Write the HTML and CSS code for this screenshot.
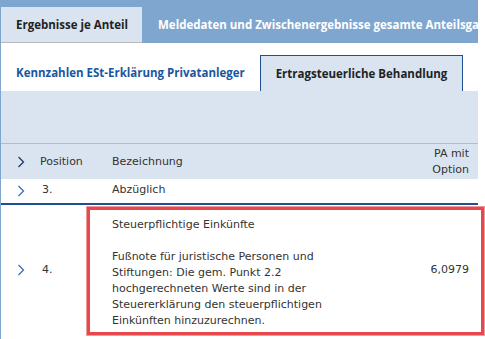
FILE: index.html
```html
<!DOCTYPE html>
<html lang="de">
<head>
  <meta charset="UTF-8">
  <title>Ertragsteuerliche Behandlung</title>
  <link rel="stylesheet" href="styles.css">
</head>
<body>
  <div class="page">
    <div class="tabs">
      <div class="tab active">Ergebnisse je Anteil</div>
      <div class="tab">Meldedaten und Zwischenergebnisse gesamte Anteilsgattung</div>
    </div>

    <div class="subtabs">
      <a class="sublink">Kennzahlen ESt-Erklärung Privatanleger</a>
      <div class="subtab">Ertragsteuerliche Behandlung</div>
    </div>

    <div class="band"></div>

    <div class="row head">
      <svg class="chev dark" width="8" height="12" viewBox="0 0 8 12"><polyline points="1.5,1 6.5,6 1.5,11" /></svg>
      <span>Position</span>
      <span>Bezeichnung</span>
      <span class="val">PA mit<br>Option</span>
    </div>

    <div class="row short">
      <svg class="chev" width="8" height="12" viewBox="0 0 8 12"><polyline points="1.5,1 6.5,6 1.5,11" /></svg>
      <span class="pos">3.</span>
      <span>Abzüglich</span>
      <span class="val"></span>
    </div>

    <div class="row tall">
      <svg class="chev" width="8" height="12" viewBox="0 0 8 12"><polyline points="1.5,1 6.5,6 1.5,11" /></svg>
      <span class="pos">4.</span>
      <span class="desc">Steuerpflichtige Einkünfte<br><br>Fußnote für juristische Personen und Stiftungen: Die gem. Punkt 2.2 hochgerechneten Werte sind in der Steuererklärung den steuerpflichtigen Einkünften hinzuzurechnen.</span>
      <span class="val">6,0979</span>
      <div class="highlight"></div>
    </div>
  </div>
</body>
</html>
```

FILE: styles.css
```css
body {
  margin: 0;
  background: #ffffff;
  font-family: "DejaVu Sans", sans-serif;
  font-size: 11px;
  color: #333333;
}

.page {
  width: 477px;
  border-left: 1px solid #7fa6cf;
  height: 339px;
}

.tabs {
  display: flex;
  background: #7fa6cf;
  padding-top: 7px;
  height: 36px;
  overflow: hidden;
  white-space: nowrap;
  font-family: "Open Sans", sans-serif;
  font-weight: bold;
  font-size: 11.5px;
}

.tab {
  padding: 0 16px;
  line-height: 35px;
  color: #ffffff;
}

.tab.active {
  flex: none;
  width: 110px;
  padding: 0 16px 0 15px;
  background: #d9e4f0;
  color: #222222;
  border-bottom: 1px solid #bbbbbb;
}

.subtabs {
  display: flex;
  align-items: flex-end;
  height: 48px;
  padding-left: 15px;
  font-family: "Open Sans", sans-serif;
  font-weight: bold;
  font-size: 11.5px;
}

.sublink {
  color: #1a56a0;
  line-height: 36px;
  width: 244px;
}

.subtab {
  width: 201px;
  height: 35px;
  line-height: 35px;
  text-align: center;
  background: #d9e4f0;
  border: 1px solid #1d4f91;
  border-bottom: none;
  color: #222222;
}

.band {
  height: 52px;
  background: #d9e4f0;
  border-bottom: 1px solid #bbbbbb;
}

.row {
  display: grid;
  grid-template-columns: 39px 72px 1fr auto;
  align-items: center;
  padding-right: 9px;
  line-height: 16px;
  position: relative;
}

.row.head {
  background: #d9e4f0;
  height: 35px;
}

.row.short {
  height: 26px;
  align-items: start;
  padding-top: 3px;
  box-sizing: border-box;
  border-bottom: 2px solid #1d4f91;
}

.row.short .chev {
  margin-top: 3px;
}

.row.tall {
  padding: 12px 9px 5px 0;
}

.row.tall .chev,
.row.tall .pos,
.row.tall .val {
  margin-top: -6px;
}

.pos {
  padding-left: 2px;
}

.desc {
  width: 218px;
}

.val {
  text-align: right;
}

.chev {
  justify-self: center;
  fill: none;
  stroke: #3b6fb5;
  stroke-width: 1.3;
}

.chev.dark {
  stroke: #1f3a6e;
}

.highlight {
  position: absolute;
  left: 86px;
  top: 2px;
  width: 391px;
  height: 122px;
  border: 3px solid #e8474c;
  box-shadow: 0 0 0 1px #f39a9c;
}
```
